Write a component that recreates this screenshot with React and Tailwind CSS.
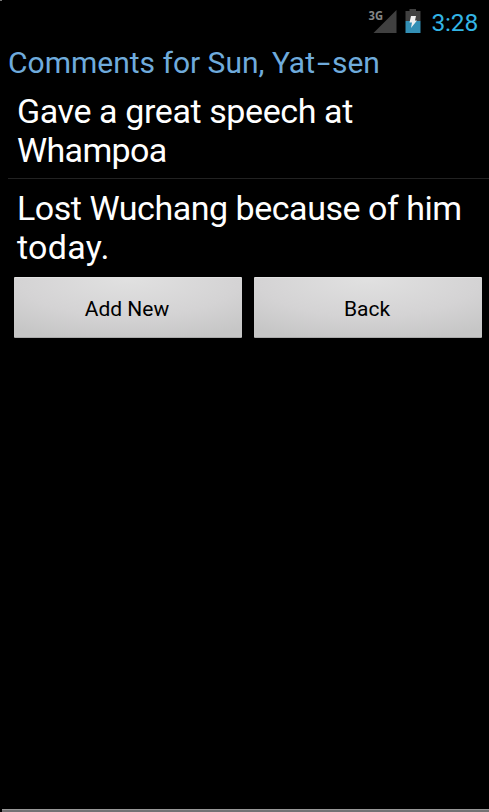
function SignalIcon() {
  return (
    <svg className="overflow-visible" width="30" height="30" viewBox="0 -4 30 30" aria-label="3G signal">
      <path d="M5.5 25 28.5 2V25Z" fill="#404040" />
      <text x="0.5" y="12" fontFamily="Open Sans, sans-serif" fontSize="13" fontWeight="700" textLength="14.5" lengthAdjust="spacingAndGlyphs" fill="#858585" stroke="#000" strokeWidth="1" paintOrder="stroke">3G</text>
    </svg>
  );
}

function BatteryIcon() {
  return (
    <svg width="16" height="26" viewBox="0 0 16 26" aria-label="Battery charging">
      <path d="M4.5 1h6.5v2h4.5v10H.5V3h4Z" fill="#404040" />
      <path d="M.5 13h15v12H.5Z" fill="#338fb5" />
      <path d="M6 8h5l-1 4.5h2L6 20l1-5.5H4.5Z" fill="#f0f0f0" />
    </svg>
  );
}

function GrayButton({ children }) {
  return (
    <button className="h-[61px] w-[228px] rounded-[1px] border-t border-b border-t-[#e2e2e2] border-b-[#aaa] bg-[radial-gradient(ellipse_90%_120%_at_50%_0%,#e1e1e1_0%,#d4d3d4_55%,#c6c6c6_90%)] pt-[3px] pr-[2px] text-[21px] leading-[24px] text-black">
      {children}
    </button>
  );
}

export default function App() {
  return (
    <div className="relative flex h-[812px] w-[489px] flex-col overflow-hidden bg-black font-['Roboto',sans-serif] text-white">
      <span className="absolute top-0 left-0 h-px w-[2px] bg-[#777]" />
      <header className="flex h-[43px] items-start justify-end pr-[11px]">
        <div className="mt-1 mr-[11px] flex items-end gap-[7px]">
          <SignalIcon />
          <BatteryIcon />
        </div>
        <span className="mt-[6px] text-[24.5px] leading-[34px] text-[#33b5e5] tracking-[-0.2px]">3:28</span>
      </header>
      <h1 className="h-[43px] pl-2 text-[30px] leading-[40px] whitespace-nowrap text-[#6fabdc]">
        Comments for Sun, Yat<span className="inline-block w-[17px] origin-left translate-x-[2px] scale-x-[1.6]">-</span>sen
      </h1>
      <p className="ml-2 h-[93px] border-b border-[#222] pt-[6px] pl-[9px] text-[34px] leading-[39px] whitespace-nowrap">
        <span className="block tracking-[-0.4px]">Gave a great speech at</span>
        <span className="block tracking-[-0.65px]">Whampoa</span>
      </p>
      <p className="ml-2 h-[93px] pt-[10px] pl-[9px] text-[34px] leading-[39px] whitespace-nowrap">
        <span className="block tracking-[-0.47px]">Lost Wuchang because of him</span>
        <span className="block tracking-[0.3px]">today.</span>
      </p>
      <div className="mt-[5px] ml-[14px] flex gap-3">
        <GrayButton>Add New</GrayButton>
        <GrayButton>Back</GrayButton>
      </div>
      <footer className="mt-auto ml-[2px] h-[3px] border-t border-[#999] bg-[#747274]" />
    </div>
  );
}
